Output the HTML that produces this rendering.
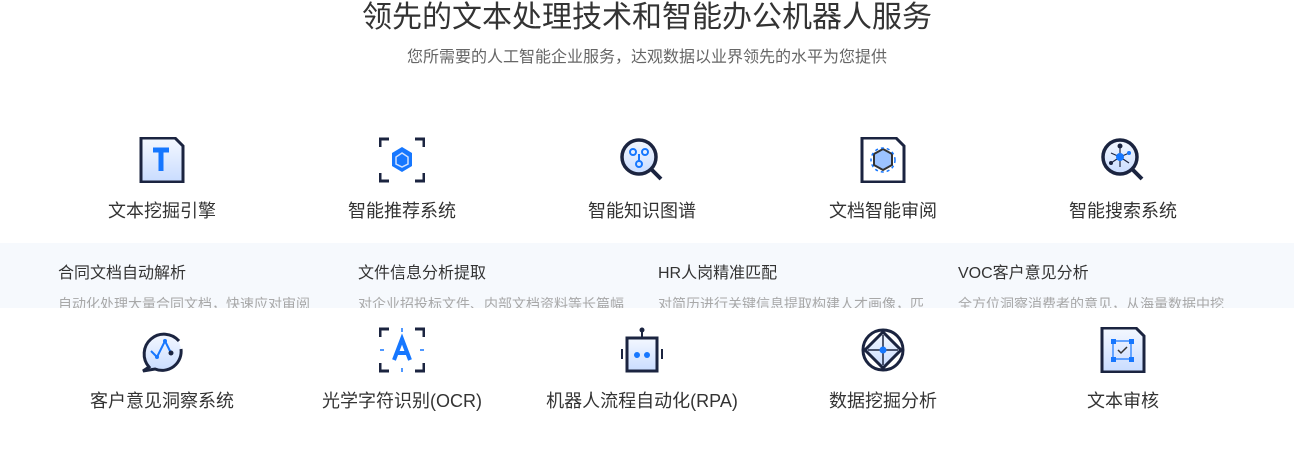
<!DOCTYPE html><html><head><meta charset="utf-8"><style>
*{margin:0;padding:0;box-sizing:border-box}
body{width:1294px;height:452px;background:#fff;font-family:"Liberation Sans","Noto Sans CJK SC",sans-serif;position:relative;overflow:hidden;color:#333}
.t{position:absolute;left:0;width:1294px;text-align:center}
.it{position:absolute;width:240px;text-align:center}
.it svg{display:block;margin:0 auto}
.it div{font-size:18px;color:#333;margin-top:18px;line-height:20px}
.band{position:absolute;left:0;top:243px;width:1294px;height:65px;background:#f6f9fd;overflow:hidden}
.c{position:absolute;top:20px;width:270px}
.c h4{font-weight:normal;font-size:16px;color:#333;line-height:22px}
.c p{font-size:14px;color:#a8a8a8;margin-top:9px;white-space:nowrap;overflow:hidden;line-height:20px}
</style></head><body>
<div class="t" style="top:-1px;font-size:30px;line-height:38px;color:#333">领先的文本处理技术和智能办公机器人服务</div>
<div class="t" style="top:47px;font-size:16px;color:#666;line-height:22px">您所需要的人工智能企业服务，达观数据以业界领先的水平为您提供</div>
<svg width="0" height="0" style="position:absolute"><defs><linearGradient id="g" x1="0" y1="0" x2="0" y2="1"><stop offset="0" stop-color="#f4f8ff"/><stop offset="1" stop-color="#c9dcff"/></linearGradient></defs></svg>

<div class="it" style="left:42px;top:137px"><svg width="46" height="46" viewBox="0 0 46 46"><path d="M2 1H36L44 9V45H2Z" fill="url(#g)" stroke="#1b2440" stroke-width="3"/><path d="M14 13H30M22 13V34" stroke="#1677ff" stroke-width="5"/></svg><div>文本挖掘引擎</div></div>
<div class="it" style="left:282px;top:137px"><svg width="46" height="46" viewBox="0 0 46 46"><path d="M1 10V2H10M36 2H45V10M45 36V44H36M10 44H1V36" fill="none" stroke="#1b2440" stroke-width="3"/><path d="M23 10L33 16V29L23 35L13 29V16Z" fill="#1677ff"/><path d="M23 16L29 20V27L23 30L17 27V20Z" fill="none" stroke="#cfe0ff" stroke-width="1.5"/></svg><div>智能推荐系统</div></div>
<div class="it" style="left:522px;top:137px"><svg width="46" height="46" viewBox="0 0 46 46"><circle cx="20" cy="20" r="17" fill="url(#g)" stroke="#1b2440" stroke-width="3.5"/><path d="M32 32L42 42" stroke="#1b2440" stroke-width="4"/><g fill="none" stroke="#1677ff" stroke-width="2"><circle cx="14" cy="15" r="3"/><circle cx="26" cy="15" r="3"/><circle cx="20" cy="27" r="3"/><path d="M20 17V24"/></g></svg><div>智能知识图谱</div></div>
<div class="it" style="left:763px;top:137px"><svg width="46" height="46" viewBox="0 0 46 46"><path d="M2 1H36L44 9V45H2Z" fill="#fff" stroke="#1b2440" stroke-width="3"/><path d="M23 12L32 17V28L23 33L14 28V17Z" fill="#9cc3ff" stroke="#333" stroke-width="2"/><circle cx="23" cy="23" r="12" fill="none" stroke="#1677ff" stroke-width="1.5" stroke-dasharray="3 3"/></svg><div>文档智能审阅</div></div>
<div class="it" style="left:1003px;top:137px"><svg width="46" height="46" viewBox="0 0 46 46"><circle cx="20" cy="20" r="17" fill="url(#g)" stroke="#1b2440" stroke-width="3.5"/><path d="M32 32L42 42" stroke="#1b2440" stroke-width="4"/><g stroke="#1b2440" stroke-width="1.2"><path d="M20 9V20M20 20L11 16M20 20L29 16M20 20L11 26M20 20L29 26M20 20V30"/></g><circle cx="20" cy="20" r="4" fill="#1677ff"/><circle cx="20" cy="9" r="2.5" fill="#1b2440"/><circle cx="29" cy="16" r="2" fill="#1677ff"/><circle cx="11" cy="26" r="2" fill="#1b2440"/></svg><div>智能搜索系统</div></div>

<div class="band">
<div class="c" style="left:58px"><h4>合同文档自动解析</h4><p>自动化处理大量合同文档，快速应对审阅</p></div>
<div class="c" style="left:358px"><h4>文件信息分析提取</h4><p>对企业招投标文件、内部文档资料等长篇幅</p></div>
<div class="c" style="left:658px"><h4>HR人岗精准匹配</h4><p>对简历进行关键信息提取构建人才画像，匹</p></div>
<div class="c" style="left:958px"><h4>VOC客户意见分析</h4><p>全方位洞察消费者的意见，从海量数据中挖</p></div>
</div>

<div class="it" style="left:42px;top:327px"><svg width="46" height="46" viewBox="0 0 46 46"><path d="M40 14A19 19 0 1 0 10 40L4 44L16 42A19 19 0 0 0 42 22" fill="url(#g)" stroke="#1b2440" stroke-width="3"/><path d="M12 24L18 30L26 14L32 26" fill="none" stroke="#1677ff" stroke-width="2"/><circle cx="18" cy="30" r="2" fill="#1677ff"/><circle cx="26" cy="14" r="2" fill="#1677ff"/><circle cx="32" cy="26" r="2.5" fill="#1b2440"/></svg><div>客户意见洞察系统</div></div>
<div class="it" style="left:282px;top:327px"><svg width="46" height="46" viewBox="0 0 46 46"><path d="M1 10V2H10M36 2H45V10M45 36V44H36M10 44H1V36" fill="none" stroke="#1b2440" stroke-width="3"/><path d="M15 33L23 12L31 33M18 26H28" fill="none" stroke="#1677ff" stroke-width="4"/><path d="M23 1V5M23 41V45M1 23H5M41 23H45" stroke="#1677ff" stroke-width="1.5"/></svg><div>光学字符识别(OCR)</div></div>
<div class="it" style="left:522px;top:327px"><svg width="46" height="46" viewBox="0 0 46 46"><path d="M23 2V10" stroke="#1b2440" stroke-width="2"/><circle cx="23" cy="3" r="2.5" fill="#1b2440"/><rect x="8" y="11" width="30" height="33" fill="url(#g)" stroke="#1b2440" stroke-width="3"/><path d="M3 22V32M43 22V32" stroke="#1b2440" stroke-width="2"/><circle cx="18" cy="28" r="3" fill="#1677ff"/><circle cx="28" cy="28" r="3" fill="#1677ff"/></svg><div>机器人流程自动化(RPA)</div></div>
<div class="it" style="left:763px;top:327px"><svg width="46" height="46" viewBox="0 0 46 46"><circle cx="23" cy="23" r="20" fill="none" stroke="#1b2440" stroke-width="3"/><path d="M23 5L41 23L23 41L5 23Z" fill="url(#g)" stroke="#1b2440" stroke-width="3"/><path d="M23 8V38M8 23H38" stroke="#1b2440" stroke-width="1.5"/><circle cx="23" cy="23" r="3.5" fill="#1677ff"/></svg><div>数据挖掘分析</div></div>
<div class="it" style="left:1003px;top:327px"><svg width="46" height="46" viewBox="0 0 46 46"><path d="M2 1H36L44 9V45H2Z" fill="url(#g)" stroke="#1b2440" stroke-width="3"/><g fill="#1677ff"><rect x="11" y="12" width="5" height="5"/><rect x="29" y="12" width="5" height="5"/><rect x="11" y="30" width="5" height="5"/><rect x="29" y="30" width="5" height="5"/></g><path d="M16 14H29M13 17V30M16 32H29M31 17V30" stroke="#1677ff" stroke-width="1.2"/><path d="M18 23L21 26L27 20" fill="none" stroke="#333" stroke-width="1.5"/></svg><div>文本审核</div></div>
</body></html>
